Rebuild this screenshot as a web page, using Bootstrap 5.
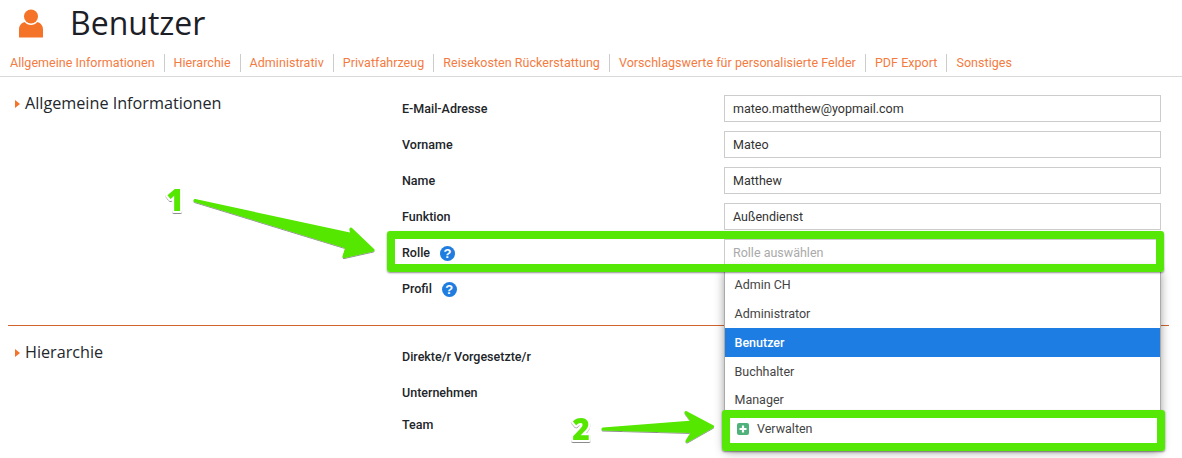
<!DOCTYPE html>
<html lang="de">
<head>
<meta charset="utf-8">
<title>Benutzer</title>
<link rel="stylesheet" href="https://cdn.jsdelivr.net/npm/bootstrap@5.3.0/dist/css/bootstrap.min.css">
<style>
html,body{height:458px;overflow:hidden;background:#fff}
body{position:relative;font-family:Roboto,"Liberation Sans",sans-serif;font-size:13px;color:#212529}
.page-head{height:46px;padding-left:19px;gap:27px}
.page-head h1{font:400 32px/46px "Open Sans",sans-serif;margin:0;color:#1c2026}
.tabbar{height:31px;border-bottom:1px solid #d9d9d9;padding:8px 0 0 10px;margin:0;list-style:none}
.tabbar li{height:18px;line-height:18px;padding-right:9px;margin-right:9px;border-right:1px solid #ccc}
.tabbar li:last-child{border:0}
.tabbar a{color:#f47b3f;text-decoration:none;font-size:12.5px;letter-spacing:.04px}
.sect-one{padding-top:18px;height:249px;border-bottom:1px solid #d0642c;margin:0 13px 0 8px}
.sect-two{padding:17px 0 0 8px}
.sect-title{width:394px;flex:none;font:400 16.2px/21px "Open Sans",sans-serif;color:#23272c;padding-left:7px;gap:5px}
.sect-one .sect-title{margin-top:-2px}
.sect-two .sect-title{margin-top:-1px}
.caret-mark{width:0;height:0;border-left:5px solid #f47328;border-top:4.5px solid transparent;border-bottom:4.5px solid transparent}
.field{height:27px;margin-bottom:9px;width:759px}
.field label{width:322px;flex:none;font-weight:500;font-size:12.5px;color:#212529;gap:10px;padding-top:2px}
.field input{width:437px;flex:none;height:27px;border:1px solid #ccc;border-radius:0;padding:0 8px;font-size:12.5px;color:#333;background:#fff;box-shadow:none}
.field input::placeholder{color:#aaa;opacity:1}
.field-tight{margin-bottom:5px}
.hint{width:15px;height:15px;border-radius:50%;background:#1f7de0;color:#fff;font:700 13px/15px "Liberation Sans",sans-serif;text-align:center;display:inline-block}
.picker{position:absolute;left:725px;top:270px;width:435px;height:180px;background:#fff;box-shadow:1px 0 0 #aaa,-1px 0 0 #aaa,0 1px 10px rgba(0,0,0,.45);margin:0;padding:0;list-style:none;font-size:12.5px;color:#444}
.picker li{height:29px;line-height:29px;padding-left:9.5px}
.picker li.short-row{height:28px;line-height:27px}
.picker li.active-row{background:#1e7de2;color:#fff;font-weight:500}
.picker li.manage{padding-left:12px;gap:8px;height:29px}
.plus-box{width:12px;height:12px;flex:none}
.callout{position:absolute;border:8px solid #55e706;border-radius:3px;box-shadow:0 1px 2px rgba(0,0,0,.45);pointer-events:none}
.callout-a{left:387px;top:231px;width:777px;height:41px}
.callout-b{left:722px;top:410px;width:443px;height:41px}
.annot{position:absolute;left:0;top:0;width:1182px;height:458px;pointer-events:none}
.annot text{font:800 30px "Open Sans",sans-serif;fill:#55e706;stroke:#fff;stroke-width:4px;paint-order:stroke;stroke-linejoin:round}
</style>
</head>
<body>
<header class="page-head d-flex align-items-center">
  <svg width="24" height="30" viewBox="0 0 24 30" aria-hidden="true"><circle cx="12" cy="8.500" r="7" fill="#f47328"/><path d="M.5 29.500c-.5 0-.5-.4-.5-1v-7c0-4 2.300-6.500 5.500-7.500 1.800 2 4 3 6.500 3s4.700-1 6.500-3c3.200 1 5.500 3.500 5.500 7.500v7c0 .6 0 1-.5 1z" fill="#f47328"/></svg>
  <h1>Benutzer</h1>
</header>
<ul class="tabbar d-flex">
  <li><a href="#">Allgemeine Informationen</a></li>
  <li><a href="#">Hierarchie</a></li>
  <li><a href="#">Administrativ</a></li>
  <li><a href="#">Privatfahrzeug</a></li>
  <li><a href="#">Reisekosten Rückerstattung</a></li>
  <li><a href="#">Vorschlagswerte für personalisierte Felder</a></li>
  <li><a href="#">PDF Export</a></li>
  <li><a href="#">Sonstiges</a></li>
</ul>
<section class="sect-one d-flex">
  <div class="sect-title d-flex align-items-center align-self-start"><span class="caret-mark"></span>Allgemeine Informationen</div>
  <div>
    <div class="field d-flex align-items-center"><label class="d-flex align-items-center">E-Mail-Adresse</label><input class="form-control" value="mateo.matthew@yopmail.com"></div>
    <div class="field d-flex align-items-center"><label class="d-flex align-items-center">Vorname</label><input class="form-control" value="Mateo"></div>
    <div class="field d-flex align-items-center"><label class="d-flex align-items-center">Name</label><input class="form-control" value="Matthew"></div>
    <div class="field d-flex align-items-center"><label class="d-flex align-items-center">Funktion</label><input class="form-control" value="Außendienst"></div>
    <div class="field d-flex align-items-center"><label class="d-flex align-items-center">Rolle <span class="hint">?</span></label><input class="form-control" placeholder="Rolle auswählen"></div>
    <div class="field d-flex align-items-center"><label class="d-flex align-items-center">Profil <span class="hint">?</span></label><input class="form-control"></div>
  </div>
</section>
<section class="sect-two d-flex">
  <div class="sect-title d-flex align-items-center align-self-start"><span class="caret-mark"></span>Hierarchie</div>
  <div>
    <div class="field d-flex align-items-center"><label class="d-flex align-items-center">Direkte/r Vorgesetzte/r</label><input class="form-control"></div>
    <div class="field field-tight d-flex align-items-center"><label class="d-flex align-items-center">Unternehmen</label><input class="form-control"></div>
    <div class="field d-flex align-items-center"><label class="d-flex align-items-center">Team</label><input class="form-control"></div>
  </div>
</section>

<ul class="picker">
  <li>Admin CH</li>
  <li>Administrator</li>
  <li class="active-row">Benutzer</li>
  <li>Buchhalter</li>
  <li class="short-row">Manager</li>
  <li class="manage d-flex align-items-center"><svg class="plus-box" viewBox="0 0 12 12" aria-hidden="true"><rect width="12" height="12" rx="2" fill="#4fb27a"/><path d="M6 2.500v7M2.500 6h7" stroke="#fff" stroke-width="2.200"/></svg>Verwalten</li>
</ul>

<div class="callout callout-a"></div>
<div class="callout callout-b"></div>
<svg class="annot" viewBox="0 0 1182 458">
  <defs>
    <filter id="sh" x="-5%" y="-20%" width="110%" height="150%"><feDropShadow dx="0" dy="1" stdDeviation=".7" flood-color="#000" flood-opacity=".45"/></filter>
  </defs>
  <g filter="url(#sh)" fill="#55e706" stroke="#55e706" stroke-width="3" stroke-linejoin="round">
    <path d="M195 200.500 352 234.500 351 229 373 250 344 256.500 347 247Z"/>
    <path d="M603 429 693 422 686 412.500 712.500 426.500 687 441 693 431.500Z"/>
  </g>
  <g filter="url(#sh)">
    <text x="175" y="211" text-anchor="middle">1</text>
    <text x="581" y="440" text-anchor="middle">2</text>
  </g>
</svg>
</body>
</html>
